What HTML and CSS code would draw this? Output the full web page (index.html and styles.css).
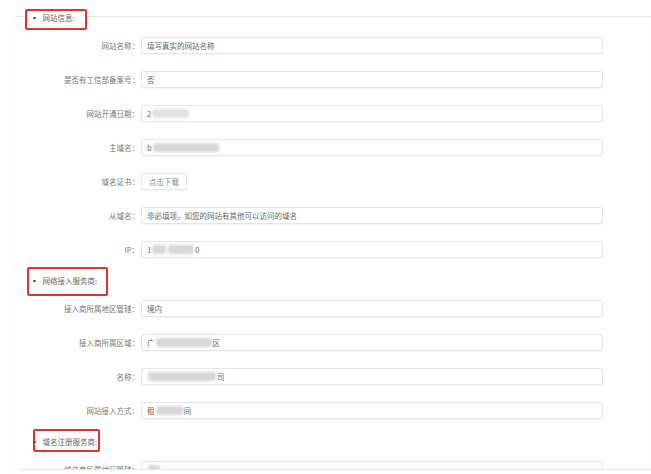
FILE: index.html
```html
<!DOCTYPE html>
<html lang="zh-CN">
<head>
  <meta charset="UTF-8">
  <meta name="viewport" content="width=device-width, initial-scale=1.0">
  <title>网站信息</title>
  <link rel="stylesheet" href="styles.css">
</head>
<body>
  <main class="form">
    <!-- 网站信息 -->
    <section class="section">
      <h3 class="section-title section-title--first"><span class="mark mark--a"></span><span class="title-text">网站信息:</span></h3>
      <div class="row">
        <label class="row-label">网站名称：</label>
        <div class="field">填写真实的网站名称</div>
      </div>
      <div class="row">
        <label class="row-label">是否有工信部备案号：</label>
        <div class="field">否</div>
      </div>
      <div class="row">
        <label class="row-label">网站开通日期：</label>
        <div class="field">2<span class="blur blur--light" style="width:37px"></span></div>
      </div>
      <div class="row">
        <label class="row-label">主域名：</label>
        <div class="field">b<span class="blur" style="width:66px"></span></div>
      </div>
      <div class="row">
        <label class="row-label">域名证书：</label>
        <button class="btn">点击下载</button>
      </div>
      <div class="row">
        <label class="row-label">从域名：</label>
        <div class="field">非必填项，如您的网站有其他可以访问的域名</div>
      </div>
      <div class="row">
        <label class="row-label">IP：</label>
        <div class="field">1<span class="blur" style="width:14px"></span><span class="blur" style="width:26px"></span>0</div>
      </div>
    </section>

    <!-- 网络接入服务商 -->
    <section class="section">
      <h3 class="section-title"><span class="mark mark--b"></span><span class="title-text">网络接入服务商:</span></h3>
      <div class="row">
        <label class="row-label">接入商所属地区管辖：</label>
        <div class="field">境内</div>
      </div>
      <div class="row">
        <label class="row-label">接入商所属区域：</label>
        <div class="field">广<span class="blur" style="width:56px"></span>区</div>
      </div>
      <div class="row">
        <label class="row-label">名称：</label>
        <div class="field"><span class="blur" style="width:68px"></span>司</div>
      </div>
      <div class="row">
        <label class="row-label">网站接入方式：</label>
        <div class="field">租<span class="blur" style="width:27px"></span>间</div>
      </div>
    </section>

    <!-- 域名注册服务商 -->
    <section class="section">
      <h3 class="section-title"><span class="mark mark--c"></span><span class="title-text">域名注册服务商:</span></h3>
      <div class="row">
        <label class="row-label">域名商所属地区管辖：</label>
        <div class="field"><span class="blur" style="width:12px"></span></div>
      </div>
    </section>
  </main>

  <div class="crop-edge"></div>
</body>
</html>
```

FILE: styles.css
```css
:root {
  --clr-text: #666;
  --clr-label: #777;
  --clr-line: #e6e6e6;
  --clr-mark: #e2342d;
}
* { margin: 0; padding: 0; box-sizing: border-box; }
body {
  font-family: "Noto Sans CJK SC", "Noto Sans", sans-serif;
  font-size: 7.5px;
  color: var(--clr-text);
  background: #fff;
  padding-top: 16px;
  height: 474px;
  overflow: hidden;
}
.form {
  margin-left: 15px;
  border-top: 1px solid var(--clr-line);
  box-shadow: inset 0 1px 2px rgba(0,0,0,0.03);
}
.section-title {
  position: relative;
  height: 12px;
  line-height: 12px;
  margin-bottom: 13px;
  padding-left: 18px;
  font-size: 7.5px;
  font-weight: 400;
  color: #666;
  display: flex;
  align-items: center;
}
.section-title--first { margin-top: -5px; }
.title-text {
  position: relative;
  z-index: 1;
  display: flex;
  align-items: center;
}
.title-text::before {
  content: "";
  width: 2.5px;
  height: 2.5px;
  border-radius: 50%;
  background: #555;
  margin-right: 7px;
}
/* red annotation frames drawn over the headings */
.mark {
  position: absolute;
  border: 2px solid var(--clr-mark);
  border-radius: 2px;
  background: #fff;
}
.mark--a { left: 10px; top: -3px; width: 62px; height: 21px; }
.mark--b { left: 12px; top: -8px; width: 81px; height: 29px; }
.mark--c { left: 18px; top: -7px; width: 67px; height: 23px; }

.row {
  display: grid;
  grid-template-columns: 124px 462px;
  column-gap: 2px;
  align-items: center;
  height: 17px;
  margin-bottom: 17px;
}
.row-label {
  text-align: right;
  color: var(--clr-label);
  white-space: nowrap;
}
.field {
  height: 17px;
  border: 1px solid var(--clr-line);
  border-radius: 2px;
  box-shadow: 0 1px 1px rgba(0,0,0,0.04);
  padding-left: 5px;
  display: flex;
  align-items: center;
  color: var(--clr-text);
  white-space: nowrap;
}
.blur {
  display: inline-block;
  height: 9px;
  margin: 0 1px;
  background: #d6d6d6;
  border-radius: 3px;
  filter: blur(1.4px);
}
.blur--light { background: #e2e2e2; }
.btn {
  justify-self: start;
  width: 46px;
  height: 17px;
  border: 1px solid var(--clr-line);
  border-radius: 2px;
  background: #fff;
  font-family: inherit;
  font-size: 7.5px;
  color: #888;
  box-shadow: 0 1px 1px rgba(0,0,0,0.04);
}
.crop-edge {
  position: fixed;
  left: 20px;
  right: 0;
  top: 469px;
  bottom: 0;
  background: #fff;
  border-top: 1px solid var(--clr-line);
}
```
